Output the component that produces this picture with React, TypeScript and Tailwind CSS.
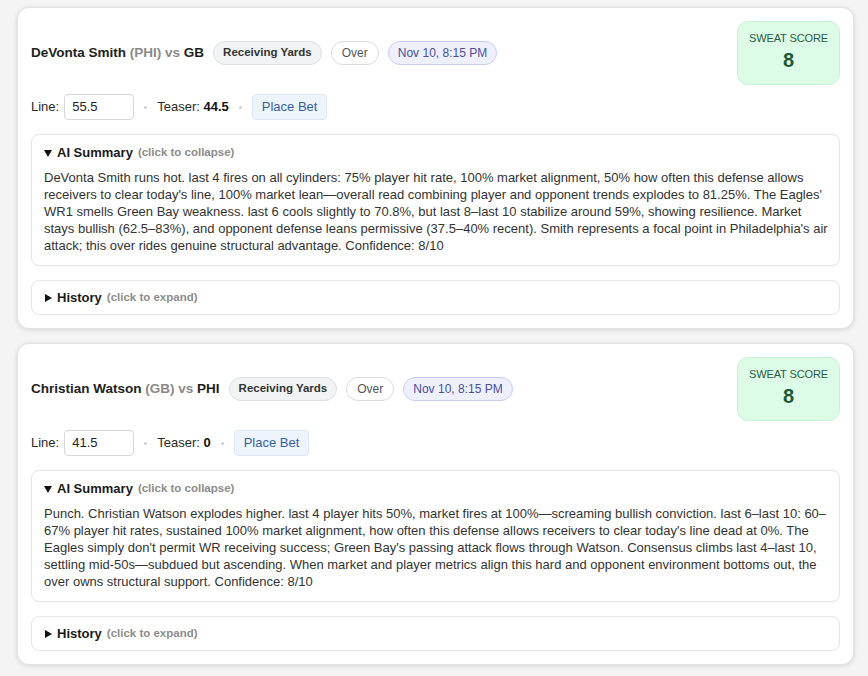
import React from "react";

type Bet = {
  player: string;
  team: string;
  opp: string;
  line: string;
  teaser: string;
  summary: string;
};

const bets: Bet[] = [
  {
    player: "DeVonta Smith",
    team: "PHI",
    opp: "GB",
    line: "55.5",
    teaser: "44.5",
    summary:
      "DeVonta Smith runs hot. last 4 fires on all cylinders: 75% player hit rate, 100% market alignment, 50% how often this defense allows receivers to clear today's line, 100% market lean\u2014overall read combining player and opponent trends explodes to 81.25%. The Eagles' WR1 smells Green Bay weakness. last 6 cools slightly to 70.8%, but last 8\u2013last 10 stabilize around 59%, showing resilience. Market stays bullish (62.5\u201383%), and opponent defense leans permissive (37.5\u201340% recent). Smith represents a focal point in Philadelphia's air attack; this over rides genuine structural advantage. Confidence: 8/10",
  },
  {
    player: "Christian Watson",
    team: "GB",
    opp: "PHI",
    line: "41.5",
    teaser: "0",
    summary:
      "Punch. Christian Watson explodes higher. last 4 player hits 50%, market fires at 100%\u2014screaming bullish conviction. last 6\u2013last 10: 60\u201367% player hit rates, sustained 100% market alignment, how often this defense allows receivers to clear today's line dead at 0%. The Eagles simply don't permit WR receiving success; Green Bay's passing attack flows through Watson. Consensus climbs last 4\u2013last 10, settling mid-50s\u2014subdued but ascending. When market and player metrics align this hard and opponent environment bottoms out, the over owns structural support. Confidence: 8/10",
  },
];

function Down() {
  return (
    <svg width="8" height="8" viewBox="0 0 8 8" className="shrink-0">
      <polygon points="0,1 8,1 4,8" fill="#111" />
    </svg>
  );
}

function Right() {
  return (
    <svg width="8" height="8" viewBox="0 0 8 8" className="shrink-0">
      <polygon points="1,0 8,4 1,8" fill="#111" />
    </svg>
  );
}

function Dot() {
  return <span className="block h-[3px] w-[3px] rounded-full bg-[#cfcfcf]" />;
}

function Card({ b }: { b: Bet }) {
  return (
    <div className="rounded-[12px] border border-[#e3e3e3] bg-white p-[13px] shadow-[0_1px_5px_rgba(0,0,0,0.13)]">
      <div className="flex items-center justify-between">
        <div className="flex items-center gap-[9px]">
          <div className="text-[13.5px] font-semibold text-[#222] whitespace-nowrap">
            {b.player} <span className="text-[#8a8a8a]">({b.team})</span>{" "}
            <span className="text-[#8a8a8a]">vs</span> <span className="font-bold text-[#1e1e1e]">{b.opp}</span>
          </div>
          <span className="flex h-[24px] items-center rounded-full border border-[#dcdfe3] bg-[#f1f3f5] px-[9px] text-[11.5px] font-semibold text-[#333]">
            Receiving Yards
          </span>
          <span className="flex h-[24px] items-center rounded-full border border-[#dcdcdc] bg-white px-[10px] text-[12px] text-[#555]">
            Over
          </span>
          <span className="flex h-[24px] items-center rounded-full border border-[#c9cdf2] bg-[#eef0fe] px-[9px] text-[12px] text-[#4a4f9c]">
            Nov 10, 8:15 PM
          </span>
        </div>
        <div className="flex h-[64px] w-[103px] flex-col items-center rounded-[11px] border border-[#c8f2d6] bg-[#dcfce7] pt-[9px]">
          <div className="text-[11px] leading-[14px] tracking-[-0.1px] text-[#2b5a42]">SWEAT SCORE</div>
          <div className="mt-[5px] text-[20px] font-black leading-[20px] text-[#1c5a36]">8</div>
        </div>
      </div>

      <div className="mt-[9px] flex items-center gap-[10px] text-[13px] text-[#2a2a2a]">
        <div className="flex items-center gap-[5px]">
          <span>Line:</span>
          <div className="flex h-[26px] w-[70px] items-center rounded-[4px] border border-[#d8d8d8] bg-white px-[7px] text-[13px] text-[#222]">
            {b.line}
          </div>
        </div>
        <Dot />
        <span>
          Teaser: <span className="font-bold text-[#111]">{b.teaser}</span>
        </span>
        <Dot />
        <button className="flex h-[26px] items-center rounded-[4px] border border-[#dde7f4] bg-[#eef4fc] px-[9px] text-[13px] text-[#3560a6]">
          Place Bet
        </button>
      </div>

      <div className="mt-[14px] rounded-[8px] border border-[#e5e5e5] pl-[12px] pr-[9px] pt-[9px] pb-[11px]">
        <div className="flex items-center gap-[5px] leading-[17px]">
          <Down />
          <span className="text-[13px] font-semibold text-[#1a1a1a]">AI Summary</span>
          <span className="text-[11.5px] font-semibold text-[#8c8c8c]">(click to collapse)</span>
        </div>
        <p className="mt-[8px] text-[13px] leading-[17px] text-[#333]">{b.summary}</p>
      </div>

      <div className="mt-[14px] rounded-[8px] border border-[#e5e5e5] px-[12px] py-[8px]">
        <div className="flex items-center gap-[5px] leading-[17px]">
          <Right />
          <span className="text-[13px] font-semibold text-[#1a1a1a]">History</span>
          <span className="text-[11.5px] font-semibold text-[#8c8c8c]">(click to expand)</span>
        </div>
      </div>
    </div>
  );
}

export default function App() {
  return (
    <div
      className="min-h-screen bg-[#f4f4f4] pt-[7px] pl-[17px] pr-[14px] pb-4 flex flex-col gap-[14px]"
      style={{ fontFamily: '"Liberation Sans", Arial, sans-serif' }}
    >
      {bets.map((b) => (
        <Card key={b.player} b={b} />
      ))}
    </div>
  );
}
